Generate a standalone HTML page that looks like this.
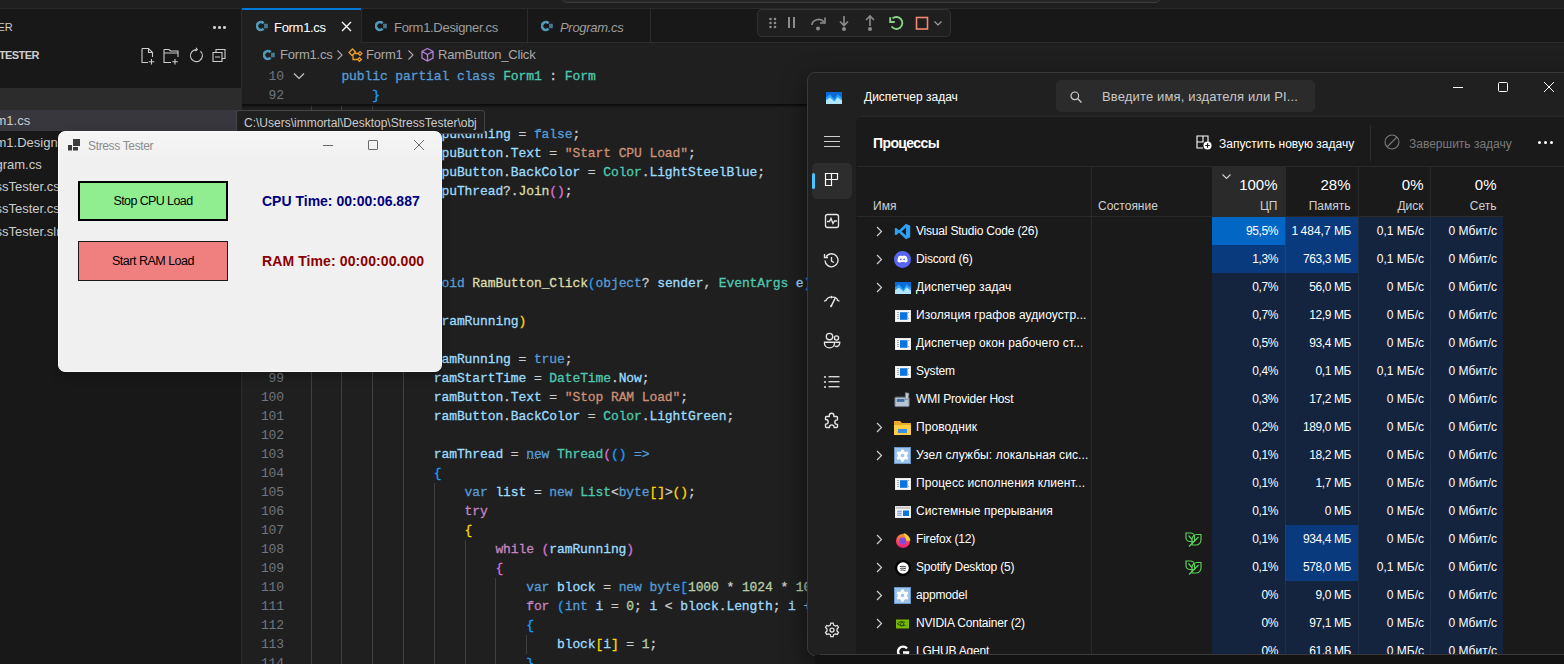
<!DOCTYPE html><html><head><meta charset='utf-8'><style>
*{box-sizing:border-box;margin:0;padding:0}
html,body{width:1564px;height:664px;overflow:hidden;background:#1f1f1f;font-family:"Liberation Sans",sans-serif;}
.a{position:absolute}
.t{position:absolute;white-space:pre;line-height:1}
.mono{font-family:"Liberation Mono",monospace;font-size:13px;letter-spacing:-0.1px;-webkit-text-stroke:0.3px currentColor;white-space:pre;position:absolute;line-height:19px;height:19px}
.k{color:#569cd6}.c{color:#c586c0}.y{color:#4ec9b0}.v{color:#9cdcfe}.f{color:#dcdcaa}.s{color:#ce9178}.n{color:#b5cea8}.p{color:#cccccc}
.b1{color:#ffd700}.b2{color:#da70d6}.b3{color:#179fff}
.ln{color:#6e7681;text-align:right;width:40px;-webkit-text-stroke:0}
.g{position:absolute;width:1px;background:#404040}
</style></head><body>
<div class='a' style='left:0;top:0;width:1564px;height:8px;background:#1f1f1f'></div>
<div class='a' style='left:561px;top:-20px;width:600px;height:23px;background:#262626;border:1px solid #3c3c3c;border-radius:6px'></div>
<div class='a' style='left:0;top:8px;width:1564px;height:1px;background:#2b2b2b'></div>
<div class='a' style='left:0;top:9px;width:241px;height:655px;background:#181818'></div>
<div class='a' style='left:241px;top:9px;width:1px;height:655px;background:#2b2b2b'></div>
<div class='t' style='left:-2.5px;top:22px;font-size:11px;color:#cccccc'>ER</div>
<div class='a' style='left:213px;top:26px;width:2.5px;height:2.5px;border-radius:50%;background:#cccccc'></div>
<div class='a' style='left:218px;top:26px;width:2.5px;height:2.5px;border-radius:50%;background:#cccccc'></div>
<div class='a' style='left:223px;top:26px;width:2.5px;height:2.5px;border-radius:50%;background:#cccccc'></div>
<div class='t' style='left:-1px;top:50px;font-size:11px;font-weight:700;color:#cccccc;letter-spacing:-0.6px'>TESTER</div>
<svg class='a' style='left:140px;top:47px' width='88' height='18' viewBox='0 0 88 18' fill='none' stroke='#cccccc' stroke-width='1.1'>
<path d='M2 1.5h6.5l4 4v4.5M2 1.5v14h6M8.5 1.5v4h4M11.5 12v5.5M8.8 14.8h5.5'/>
<path d='M24 2.5h5l1.5 1.5h7.5v6M24 2.5v13h7M24 6h14M35 12v5.5M32.3 14.8h5.5'/>
<path d='M60.5 4.2a6 6 0 1 1-4.2-1.6M56 0.8l1.3 1.9-2 1.3'/>
<path d='M76 5.5v-3h9v9h-3M73 5.5h9v9h-9zM75 10h5'/>
</svg>
<div class='a' style='left:0;top:88px;width:241px;height:22px;background:#2c2c2c'></div>
<div class='a' style='left:0;top:110px;width:241px;height:21px;background:#37373d'></div>
<div class='t' style='left:-4.5px;top:114.0px;font-size:13px;color:#cccccc'>m1.cs</div>
<div class='t' style='left:-4.5px;top:136.2px;font-size:13px;color:#cccccc'>m1.Designer.cs</div>
<div class='t' style='left:-4.5px;top:158.0px;font-size:13px;color:#cccccc'>gram.cs</div>
<div class='t' style='left:-4.5px;top:180.4px;font-size:13px;color:#cccccc'>ssTester.cs</div>
<div class='t' style='left:-4.5px;top:202.1px;font-size:13px;color:#cccccc'>ssTester.cs</div>
<div class='t' style='left:-4.5px;top:224.5px;font-size:13px;color:#cccccc'>ssTester.sln</div>
<div class='a' style='left:242px;top:9px;width:1322px;height:34px;background:#181818'></div>
<div class='a' style='left:242px;top:42px;width:1322px;height:1px;background:#2b2b2b'></div>
<div class='a' style='left:242px;top:8px;width:119px;height:35px;background:#1f1f1f;border-top:2px solid #0078d4'></div>
<div class='a' style='left:361px;top:9px;width:1px;height:34px;background:#2b2b2b'></div>
<div class='a' style='left:527px;top:9px;width:1px;height:34px;background:#2b2b2b'></div>
<div class='a' style='left:650px;top:9px;width:1px;height:34px;background:#2b2b2b'></div>
<svg class='a' style='left:256px;top:20px' width='12' height='12' viewBox='0 0 12 12'><path d='M7.6 3.2A3.9 3.9 0 1 0 7.6 8.8' stroke='#519aba' stroke-width='2.6' fill='none'/><path d='M9 3.6v4.8M10.9 3.6v4.8M8.1 5h3.7M8.1 7h3.7' stroke='#519aba' stroke-width='0.95'/></svg>
<div class='t' style='left:274px;top:21px;font-size:13px;color:#ffffff;letter-spacing:-0.3px'>Form1.cs</div>
<svg class='a' style='left:341px;top:21px' width='11' height='11' viewBox='0 0 11 11'><path d='M1 1l9 9M10 1l-9 9' stroke='#ffffff' stroke-width='1.3'/></svg>
<svg class='a' style='left:375px;top:20px' width='12' height='12' viewBox='0 0 12 12'><path d='M7.6 3.2A3.9 3.9 0 1 0 7.6 8.8' stroke='#519aba' stroke-width='2.6' fill='none'/><path d='M9 3.6v4.8M10.9 3.6v4.8M8.1 5h3.7M8.1 7h3.7' stroke='#519aba' stroke-width='0.95'/></svg>
<div class='t' style='left:394px;top:21px;font-size:13px;color:#9d9d9d;letter-spacing:-0.3px'>Form1.Designer.cs</div>
<svg class='a' style='left:541px;top:20px' width='12' height='12' viewBox='0 0 12 12'><path d='M7.6 3.2A3.9 3.9 0 1 0 7.6 8.8' stroke='#519aba' stroke-width='2.6' fill='none'/><path d='M9 3.6v4.8M10.9 3.6v4.8M8.1 5h3.7M8.1 7h3.7' stroke='#519aba' stroke-width='0.95'/></svg>
<div class='t' style='left:560px;top:21px;font-size:13px;color:#9d9d9d;font-style:italic;letter-spacing:-0.3px'>Program.cs</div>
<svg class='a' style='left:263px;top:49px' width='12' height='12' viewBox='0 0 12 12'><path d='M7.6 3.2A3.9 3.9 0 1 0 7.6 8.8' stroke='#519aba' stroke-width='2.6' fill='none'/><path d='M9 3.6v4.8M10.9 3.6v4.8M8.1 5h3.7M8.1 7h3.7' stroke='#519aba' stroke-width='0.95'/></svg>
<div class='t' style='left:280px;top:48px;font-size:13px;color:#a9a9a9;letter-spacing:-0.2px'>Form1.cs</div>
<svg class='a' style='left:336px;top:49px' width='8' height='12' viewBox='0 0 8 12'><path d='M1.5 1.5l4.5 4.5-4.5 4.5' stroke='#a9a9a9' stroke-width='1.1' fill='none'/></svg>
<svg class='a' style='left:348px;top:48px' width='15' height='15' viewBox='0 0 15 15' fill='none' stroke='#ee9d28' stroke-width='1.3'><path d='M1 4.5L4.5 1 7.5 4 4 7.5Z'/><path d='M12 3.6l1.9 1.9-1.9 1.9-1.9-1.9Z'/><path d='M11.5 9.6l1.9 1.9-1.9 1.9-1.9-1.9Z'/><path d='M6.3 5.5H10.1M5 6.8V11.5H9.6'/></svg>
<div class='t' style='left:366px;top:48px;font-size:13px;color:#a9a9a9;letter-spacing:-0.2px'>Form1</div>
<svg class='a' style='left:407px;top:49px' width='8' height='12' viewBox='0 0 8 12'><path d='M1.5 1.5l4.5 4.5-4.5 4.5' stroke='#a9a9a9' stroke-width='1.1' fill='none'/></svg>
<svg class='a' style='left:420px;top:47px' width='15' height='16' viewBox='0 0 15 16' fill='none' stroke='#b180d7' stroke-width='1.3'><path d='M7.5 1.5l5.5 3v6.5l-5.5 3-5.5-3v-6.5zM2 4.5l5.5 3 5.5-3M7.5 7.5v6.5'/></svg>
<div class='t' style='left:438px;top:48px;font-size:13px;color:#a9a9a9;letter-spacing:-0.2px'>RamButton_Click</div>
<div class='a' style='left:242px;top:43px;width:565px;height:621px;overflow:hidden'>
<div class='a' style='left:-242px;top:-43px;width:1564px;height:664px'>
<div class='g' style='left:310.6px;top:273.5px;height:19px'></div><div class='g' style='left:341.4px;top:273.5px;height:19px'></div>
<div class='mono ln' style='left:244px;top:273.5px'>94</div>
<div class='mono' style='left:372.2px;top:273.5px'><span class='k'>private</span><span class='p'> </span><span class='k'>void</span><span class='p'> </span><span class='f'>RamButton_Click</span><span class='b3'>(</span><span class='k'>object</span><span class='p'>? </span><span class='v'>sender</span><span class='p'>, </span><span class='y'>EventArgs</span><span class='p'> </span><span class='v'>e</span><span class='b3'>)</span></div>
<div class='g' style='left:310.6px;top:292.5px;height:19px'></div><div class='g' style='left:341.4px;top:292.5px;height:19px'></div>
<div class='mono ln' style='left:244px;top:292.5px'>95</div>
<div class='mono' style='left:372.2px;top:292.5px'><span class='b3'>{</span></div>
<div class='g' style='left:310.6px;top:311.5px;height:19px'></div><div class='g' style='left:341.4px;top:311.5px;height:19px'></div><div class='g' style='left:372.2px;top:311.5px;height:19px'></div>
<div class='mono ln' style='left:244px;top:311.5px'>96</div>
<div class='mono' style='left:403.0px;top:311.5px'><span class='c'>if</span><span class='p'> </span><span class='b1'>(</span><span class='p'>!</span><span class='v'>ramRunning</span><span class='b1'>)</span></div>
<div class='g' style='left:310.6px;top:330.5px;height:19px'></div><div class='g' style='left:341.4px;top:330.5px;height:19px'></div><div class='g' style='left:372.2px;top:330.5px;height:19px'></div>
<div class='mono ln' style='left:244px;top:330.5px'>97</div>
<div class='mono' style='left:403.0px;top:330.5px'><span class='b1'>{</span></div>
<div class='g' style='left:310.6px;top:349.5px;height:19px'></div><div class='g' style='left:341.4px;top:349.5px;height:19px'></div><div class='g' style='left:372.2px;top:349.5px;height:19px'></div><div class='g' style='left:403.0px;top:349.5px;height:19px'></div>
<div class='mono ln' style='left:244px;top:349.5px'>98</div>
<div class='mono' style='left:433.8px;top:349.5px'><span class='v'>ramRunning</span><span class='p'> = </span><span class='k'>true</span><span class='p'>;</span></div>
<div class='g' style='left:310.6px;top:368.5px;height:19px'></div><div class='g' style='left:341.4px;top:368.5px;height:19px'></div><div class='g' style='left:372.2px;top:368.5px;height:19px'></div><div class='g' style='left:403.0px;top:368.5px;height:19px'></div>
<div class='mono ln' style='left:244px;top:368.5px'>99</div>
<div class='mono' style='left:433.8px;top:368.5px'><span class='v'>ramStartTime</span><span class='p'> = </span><span class='y'>DateTime</span><span class='p'>.</span><span class='v'>Now</span><span class='p'>;</span></div>
<div class='g' style='left:310.6px;top:387.5px;height:19px'></div><div class='g' style='left:341.4px;top:387.5px;height:19px'></div><div class='g' style='left:372.2px;top:387.5px;height:19px'></div><div class='g' style='left:403.0px;top:387.5px;height:19px'></div>
<div class='mono ln' style='left:244px;top:387.5px'>100</div>
<div class='mono' style='left:433.8px;top:387.5px'><span class='v'>ramButton</span><span class='p'>.</span><span class='v'>Text</span><span class='p'> = </span><span class='s'>&quot;Stop RAM Load&quot;</span><span class='p'>;</span></div>
<div class='g' style='left:310.6px;top:406.5px;height:19px'></div><div class='g' style='left:341.4px;top:406.5px;height:19px'></div><div class='g' style='left:372.2px;top:406.5px;height:19px'></div><div class='g' style='left:403.0px;top:406.5px;height:19px'></div>
<div class='mono ln' style='left:244px;top:406.5px'>101</div>
<div class='mono' style='left:433.8px;top:406.5px'><span class='v'>ramButton</span><span class='p'>.</span><span class='v'>BackColor</span><span class='p'> = </span><span class='y'>Color</span><span class='p'>.</span><span class='v'>LightGreen</span><span class='p'>;</span></div>
<div class='g' style='left:310.6px;top:425.5px;height:19px'></div><div class='g' style='left:341.4px;top:425.5px;height:19px'></div><div class='g' style='left:372.2px;top:425.5px;height:19px'></div><div class='g' style='left:403.0px;top:425.5px;height:19px'></div>
<div class='mono ln' style='left:244px;top:425.5px'>102</div>
<div class='mono' style='left:310.6px;top:425.5px'></div>
<div class='g' style='left:310.6px;top:444.5px;height:19px'></div><div class='g' style='left:341.4px;top:444.5px;height:19px'></div><div class='g' style='left:372.2px;top:444.5px;height:19px'></div><div class='g' style='left:403.0px;top:444.5px;height:19px'></div>
<div class='mono ln' style='left:244px;top:444.5px'>103</div>
<div class='mono' style='left:433.8px;top:444.5px'><span class='v'>ramThread</span><span class='p'> = </span><span class='k'>new</span><span class='p'> </span><span class='y'>Thread</span><span class='b2'>(</span><span class='b3'>()</span><span class='p'> </span><span class='k'>=&gt;</span></div>
<div class='g' style='left:310.6px;top:463.5px;height:19px'></div><div class='g' style='left:341.4px;top:463.5px;height:19px'></div><div class='g' style='left:372.2px;top:463.5px;height:19px'></div><div class='g' style='left:403.0px;top:463.5px;height:19px'></div>
<div class='mono ln' style='left:244px;top:463.5px'>104</div>
<div class='mono' style='left:433.8px;top:463.5px'><span class='b3'>{</span></div>
<div class='g' style='left:310.6px;top:482.5px;height:19px'></div><div class='g' style='left:341.4px;top:482.5px;height:19px'></div><div class='g' style='left:372.2px;top:482.5px;height:19px'></div><div class='g' style='left:403.0px;top:482.5px;height:19px'></div><div class='g' style='left:433.8px;top:482.5px;height:19px'></div>
<div class='mono ln' style='left:244px;top:482.5px'>105</div>
<div class='mono' style='left:464.6px;top:482.5px'><span class='k'>var</span><span class='p'> </span><span class='v'>list</span><span class='p'> = </span><span class='k'>new</span><span class='p'> </span><span class='y'>List</span><span class='p'>&lt;</span><span class='k'>byte</span><span class='b1'>[]</span><span class='p'>&gt;</span><span class='b1'>()</span><span class='p'>;</span></div>
<div class='g' style='left:310.6px;top:501.5px;height:19px'></div><div class='g' style='left:341.4px;top:501.5px;height:19px'></div><div class='g' style='left:372.2px;top:501.5px;height:19px'></div><div class='g' style='left:403.0px;top:501.5px;height:19px'></div><div class='g' style='left:433.8px;top:501.5px;height:19px'></div>
<div class='mono ln' style='left:244px;top:501.5px'>106</div>
<div class='mono' style='left:464.6px;top:501.5px'><span class='c'>try</span></div>
<div class='g' style='left:310.6px;top:520.5px;height:19px'></div><div class='g' style='left:341.4px;top:520.5px;height:19px'></div><div class='g' style='left:372.2px;top:520.5px;height:19px'></div><div class='g' style='left:403.0px;top:520.5px;height:19px'></div><div class='g' style='left:433.8px;top:520.5px;height:19px'></div>
<div class='mono ln' style='left:244px;top:520.5px'>107</div>
<div class='mono' style='left:464.6px;top:520.5px'><span class='b1'>{</span></div>
<div class='g' style='left:310.6px;top:539.5px;height:19px'></div><div class='g' style='left:341.4px;top:539.5px;height:19px'></div><div class='g' style='left:372.2px;top:539.5px;height:19px'></div><div class='g' style='left:403.0px;top:539.5px;height:19px'></div><div class='g' style='left:433.8px;top:539.5px;height:19px'></div><div class='g' style='left:464.6px;top:539.5px;height:19px'></div>
<div class='mono ln' style='left:244px;top:539.5px'>108</div>
<div class='mono' style='left:495.4px;top:539.5px'><span class='c'>while</span><span class='p'> </span><span class='b2'>(</span><span class='v'>ramRunning</span><span class='b2'>)</span></div>
<div class='g' style='left:310.6px;top:558.5px;height:19px'></div><div class='g' style='left:341.4px;top:558.5px;height:19px'></div><div class='g' style='left:372.2px;top:558.5px;height:19px'></div><div class='g' style='left:403.0px;top:558.5px;height:19px'></div><div class='g' style='left:433.8px;top:558.5px;height:19px'></div><div class='g' style='left:464.6px;top:558.5px;height:19px'></div>
<div class='mono ln' style='left:244px;top:558.5px'>109</div>
<div class='mono' style='left:495.4px;top:558.5px'><span class='b2'>{</span></div>
<div class='g' style='left:310.6px;top:577.5px;height:19px'></div><div class='g' style='left:341.4px;top:577.5px;height:19px'></div><div class='g' style='left:372.2px;top:577.5px;height:19px'></div><div class='g' style='left:403.0px;top:577.5px;height:19px'></div><div class='g' style='left:433.8px;top:577.5px;height:19px'></div><div class='g' style='left:464.6px;top:577.5px;height:19px'></div><div class='g' style='left:495.4px;top:577.5px;height:19px'></div>
<div class='mono ln' style='left:244px;top:577.5px'>110</div>
<div class='mono' style='left:526.2px;top:577.5px'><span class='k'>var</span><span class='p'> </span><span class='v'>block</span><span class='p'> = </span><span class='k'>new</span><span class='p'> </span><span class='k'>byte</span><span class='b3'>[</span><span class='n'>1000</span><span class='p'> * </span><span class='n'>1024</span><span class='p'> * </span><span class='n'>1024</span><span class='b3'>]</span><span class='p'>;</span></div>
<div class='g' style='left:310.6px;top:596.5px;height:19px'></div><div class='g' style='left:341.4px;top:596.5px;height:19px'></div><div class='g' style='left:372.2px;top:596.5px;height:19px'></div><div class='g' style='left:403.0px;top:596.5px;height:19px'></div><div class='g' style='left:433.8px;top:596.5px;height:19px'></div><div class='g' style='left:464.6px;top:596.5px;height:19px'></div><div class='g' style='left:495.4px;top:596.5px;height:19px'></div>
<div class='mono ln' style='left:244px;top:596.5px'>111</div>
<div class='mono' style='left:526.2px;top:596.5px'><span class='c'>for</span><span class='p'> </span><span class='b3'>(</span><span class='k'>int</span><span class='p'> </span><span class='v'>i</span><span class='p'> = </span><span class='n'>0</span><span class='p'>; </span><span class='v'>i</span><span class='p'> &lt; </span><span class='v'>block</span><span class='p'>.</span><span class='v'>Length</span><span class='p'>; </span><span class='v'>i</span><span class='p'> += </span><span class='n'>4096</span><span class='b3'>)</span></div>
<div class='g' style='left:310.6px;top:615.5px;height:19px'></div><div class='g' style='left:341.4px;top:615.5px;height:19px'></div><div class='g' style='left:372.2px;top:615.5px;height:19px'></div><div class='g' style='left:403.0px;top:615.5px;height:19px'></div><div class='g' style='left:433.8px;top:615.5px;height:19px'></div><div class='g' style='left:464.6px;top:615.5px;height:19px'></div><div class='g' style='left:495.4px;top:615.5px;height:19px'></div>
<div class='mono ln' style='left:244px;top:615.5px'>112</div>
<div class='mono' style='left:526.2px;top:615.5px'><span class='b3'>{</span></div>
<div class='g' style='left:310.6px;top:634.5px;height:19px'></div><div class='g' style='left:341.4px;top:634.5px;height:19px'></div><div class='g' style='left:372.2px;top:634.5px;height:19px'></div><div class='g' style='left:403.0px;top:634.5px;height:19px'></div><div class='g' style='left:433.8px;top:634.5px;height:19px'></div><div class='g' style='left:464.6px;top:634.5px;height:19px'></div><div class='g' style='left:495.4px;top:634.5px;height:19px'></div><div class='g' style='left:526.2px;top:634.5px;height:19px'></div>
<div class='mono ln' style='left:244px;top:634.5px'>113</div>
<div class='mono' style='left:557.0px;top:634.5px'><span class='v'>block</span><span class='b1'>[</span><span class='v'>i</span><span class='b1'>]</span><span class='p'> = </span><span class='n'>1</span><span class='p'>;</span></div>
<div class='g' style='left:310.6px;top:653.5px;height:19px'></div><div class='g' style='left:341.4px;top:653.5px;height:19px'></div><div class='g' style='left:372.2px;top:653.5px;height:19px'></div><div class='g' style='left:403.0px;top:653.5px;height:19px'></div><div class='g' style='left:433.8px;top:653.5px;height:19px'></div><div class='g' style='left:464.6px;top:653.5px;height:19px'></div><div class='g' style='left:495.4px;top:653.5px;height:19px'></div>
<div class='mono ln' style='left:244px;top:653.5px'>114</div>
<div class='mono' style='left:526.2px;top:653.5px'><span class='b3'>}</span></div>
<div class='g' style='left:310.6px;top:124.8px;height:19px'></div><div class='g' style='left:341.4px;top:124.8px;height:19px'></div><div class='g' style='left:372.2px;top:124.8px;height:19px'></div><div class='g' style='left:403.0px;top:124.8px;height:19px'></div>
<div class='mono' style='left:433.8px;top:124.8px'><span class='v'>cpuRunning</span><span class='p'> = </span><span class='k'>false</span><span class='p'>;</span></div>
<div class='g' style='left:310.6px;top:143.8px;height:19px'></div><div class='g' style='left:341.4px;top:143.8px;height:19px'></div><div class='g' style='left:372.2px;top:143.8px;height:19px'></div><div class='g' style='left:403.0px;top:143.8px;height:19px'></div>
<div class='mono' style='left:433.8px;top:143.8px'><span class='v'>cpuButton</span><span class='p'>.</span><span class='v'>Text</span><span class='p'> = </span><span class='s'>&quot;Start CPU Load&quot;</span><span class='p'>;</span></div>
<div class='g' style='left:310.6px;top:162.8px;height:19px'></div><div class='g' style='left:341.4px;top:162.8px;height:19px'></div><div class='g' style='left:372.2px;top:162.8px;height:19px'></div><div class='g' style='left:403.0px;top:162.8px;height:19px'></div>
<div class='mono' style='left:433.8px;top:162.8px'><span class='v'>cpuButton</span><span class='p'>.</span><span class='v'>BackColor</span><span class='p'> = </span><span class='y'>Color</span><span class='p'>.</span><span class='v'>LightSteelBlue</span><span class='p'>;</span></div>
<div class='g' style='left:310.6px;top:181.8px;height:19px'></div><div class='g' style='left:341.4px;top:181.8px;height:19px'></div><div class='g' style='left:372.2px;top:181.8px;height:19px'></div><div class='g' style='left:403.0px;top:181.8px;height:19px'></div>
<div class='mono' style='left:433.8px;top:181.8px'><span class='v'>cpuThread</span><span class='p'>?.</span><span class='f'>Join</span><span class='b2'>()</span><span class='p'>;</span></div>
<div class='g' style='left:310.6px;top:200.8px;height:19px'></div><div class='g' style='left:341.4px;top:200.8px;height:19px'></div><div class='g' style='left:372.2px;top:200.8px;height:19px'></div>
<div class='mono' style='left:403.0px;top:200.8px'><span class='b1'>}</span></div>
<div class='g' style='left:310.6px;top:219.8px;height:19px'></div><div class='g' style='left:341.4px;top:219.8px;height:19px'></div>
<div class='mono' style='left:372.2px;top:219.8px'><span class='b3'>}</span></div>
<div class='g' style='left:310.6px;top:238.8px;height:19px'></div><div class='g' style='left:341.4px;top:238.8px;height:19px'></div>
<div class='mono' style='left:310.6px;top:238.8px'></div>
<div class='g' style='left:310.6px;top:104.0px;height:20px'></div><div class='g' style='left:341.4px;top:104.0px;height:20px'></div><div class='g' style='left:372.2px;top:104.0px;height:20px'></div>
<div class='a' style='left:527px;top:458px;width:11px;height:0;border-top:1.5px dotted #8a8a8a'></div>
</div></div>
<div class='a' style='left:242px;top:66px;width:565px;height:38px;background:#1f1f1f'></div>
<div class='a' style='left:242px;top:104px;width:565px;height:4px;background:linear-gradient(#0a0a0a,rgba(31,31,31,0))'></div>
<div class='mono ln' style='left:244px;top:67px'>10</div>
<svg class='a' style='left:293px;top:72px' width='12' height='8' viewBox='0 0 12 8'><path d='M1 1.5l5 5 5-5' stroke='#c5c5c5' stroke-width='1.2' fill='none'/></svg>
<div class='mono' style='left:341.4px;top:67.0px'><span class='k'>public</span><span class='p'> </span><span class='k'>partial</span><span class='p'> </span><span class='k'>class</span><span class='p'> </span><span class='y'>Form1</span><span class='p'> : </span><span class='y'>Form</span></div>
<div class='mono ln' style='left:244px;top:86px'>92</div>
<div class='mono' style='left:372.2px;top:86.0px'><span class='b3'>}</span></div>
<div class='a' style='left:757px;top:9px;width:194px;height:28px;background:#1f1f1f;border:1px solid #333333;border-radius:5px'></div>
<svg class='a' style='left:757px;top:9px' width='194' height='28' viewBox='0 0 194 28'>
<g fill='#8c8c8c'><circle cx='13.5' cy='10' r='1.3'/><circle cx='18' cy='10' r='1.3'/><circle cx='13.5' cy='14' r='1.3'/><circle cx='18' cy='14' r='1.3'/><circle cx='13.5' cy='18' r='1.3'/><circle cx='18' cy='18' r='1.3'/></g>
<g fill='#8c8c8c'><rect x='31' y='8' width='2' height='11'/><rect x='36' y='8' width='2' height='11'/></g>
<path d='M55 16a6.5 5.5 0 0 1 12-3' stroke='#8c8c8c' stroke-width='1.6' fill='none'/><path d='M68 8.5v5.5h-5' stroke='#8c8c8c' stroke-width='1.6' fill='none'/><circle cx='61' cy='19.5' r='2' fill='#8c8c8c'/>
<path d='M87 7v9M83 12.5l4 4 4-4' stroke='#8c8c8c' stroke-width='1.6' fill='none'/><circle cx='87' cy='20' r='2' fill='#8c8c8c'/>
<path d='M113 17V7.5M109 11l4-4 4 4' stroke='#8c8c8c' stroke-width='1.6' fill='none'/><circle cx='113' cy='20' r='2' fill='#8c8c8c'/>
<path d='M134.5 17.5A6 6 0 1 0 135.4 9.4' stroke='#89d185' stroke-width='1.9' fill='none'/><path d='M133.2 8.3V13h4.6' stroke='#89d185' stroke-width='1.9' fill='none'/>
<rect x='159.5' y='8.5' width='11' height='11.5' stroke='#f48771' stroke-width='1.6' fill='none'/>
<path d='M177.5 12.5l3.5 3.5 3.5-3.5' stroke='#a0a0a0' stroke-width='1.2' fill='none'/>
</svg>
<div class='a' style='left:235.5px;top:110px;width:249px;height:23.5px;background:#202020;border:1px solid #454545;border-radius:3px'></div>
<div class='t' style='left:244px;top:117px;font-size:12px;color:#cccccc'>C:\Users\immortal\Desktop\StressTester\obj</div>
<div class='a' style='left:58px;top:131px;width:384px;height:241px;background:linear-gradient(#f5f5f5,#f0f0f0 30px);border-radius:7px;box-shadow:0 4px 10px rgba(0,0,0,0.25);border:1px solid #fafafa'></div>
<svg class='a' style='left:68px;top:139px' width='13' height='12' viewBox='0 0 13 12'><rect x='0' y='6' width='4' height='5.5' fill='#3c3c3c'/><rect x='5' y='0' width='7' height='7' fill='#3c3c3c'/><rect x='5' y='8' width='5' height='3.5' fill='#3c3c3c'/></svg>
<div class='t' style='left:88px;top:140px;font-size:12px;color:#8c8c8c;letter-spacing:-0.35px'>Stress Tester</div>
<div class='a' style='left:323px;top:145px;width:10px;height:1px;background:#6a6a6a'></div>
<div class='a' style='left:368px;top:140px;width:10px;height:10px;border:1px solid #6a6a6a;border-radius:1px'></div>
<svg class='a' style='left:414px;top:140px' width='10' height='10' viewBox='0 0 10 10'><path d='M0 0l10 10M10 0l-10 10' stroke='#6a6a6a' stroke-width='1'/></svg>
<div class='a' style='left:78px;top:181px;width:150px;height:40px;background:#90ee90;border:2px solid #000'></div>
<div class='t' style='left:78px;top:195px;width:150px;text-align:center;font-size:12.5px;color:#000;letter-spacing:-0.6px'>Stop CPU Load</div>
<div class='a' style='left:78px;top:241px;width:150px;height:40px;background:#f08080;border:1px solid #1a1a1a'></div>
<div class='t' style='left:78px;top:255px;width:150px;text-align:center;font-size:12.5px;color:#000;letter-spacing:-0.5px'>Start RAM Load</div>
<div class='t' style='left:262px;top:194px;font-size:14px;font-weight:700;color:#000080;letter-spacing:0px'>CPU Time: 00:00:06.887</div>
<div class='t' style='left:262px;top:254px;font-size:14px;font-weight:700;color:#8b0000;letter-spacing:0.1px'>RAM Time: 00:00:00.000</div>
<div class='a' style='left:807px;top:72px;width:800px;height:583.5px;background:#202020;border:1px solid #3a3a3a;border-radius:8px;box-shadow:0 8px 24px rgba(0,0,0,0.5)'></div>
<div class='a' style='left:815px;top:655px;width:749px;height:9px;background:#131313'></div>
<div class='a' style='left:826px;top:90px'><svg width='16' height='12' viewBox='0 0 16 12'><rect width='16' height='12' fill='#0a6ad8'/><path d='M0 5.5L4 2.2l4.5 5.3 3-5.3L16 5.8V12H0z' fill='#2ba3f2'/><path d='M0 8.2L4 5.5l4.5 4 3-4.2L16 8.6V12H0z' fill='#b2e6ff'/></svg></div>
<div class='t' style='left:864px;top:91px;font-size:12px;color:#ffffff'>Диспетчер задач</div>
<div class='a' style='left:1056px;top:80px;width:259px;height:32px;background:#2b2b2b;border-radius:5px'></div>
<svg class='a' style='left:1070px;top:91px' width='12' height='12' viewBox='0 0 12 12'><circle cx='4.8' cy='4.8' r='3.8' stroke='#cfcfcf' stroke-width='1.2' fill='none'/><path d='M7.5 7.5l4 4' stroke='#cfcfcf' stroke-width='1.3'/></svg>
<div class='t' style='left:1102px;top:90px;font-size:13px;color:#c8c8c8;letter-spacing:0.15px'>Введите имя, издателя или PI...</div>
<div class='a' style='left:1453px;top:87px;width:10px;height:1px;background:#ffffff'></div>
<div class='a' style='left:1498px;top:82px;width:10px;height:10px;border:1px solid #ffffff;border-radius:1.5px'></div>
<svg class='a' style='left:1544px;top:82px' width='10' height='10' viewBox='0 0 10 10'><path d='M0 0l10 10M10 0l-10 10' stroke='#ffffff' stroke-width='1'/></svg>
<div class='a' style='left:824px;top:136px;width:16px;height:1.2px;background:#d0d0d0'></div>
<div class='a' style='left:824px;top:141px;width:16px;height:1.2px;background:#d0d0d0'></div>
<div class='a' style='left:824px;top:146px;width:16px;height:1.2px;background:#d0d0d0'></div>
<div class='a' style='left:812px;top:163px;width:40px;height:36px;background:#2d2d2d;border-radius:5px'></div>
<div class='a' style='left:812px;top:173px;width:3px;height:16px;background:#4cc2ff;border-radius:2px'></div>

<svg class='a' style='left:824px;top:172px' width='16' height='16' viewBox='0 0 16 16' fill='none' stroke='#ffffff' stroke-width='1.2'><path d='M1.5 1.5h6v6h-6zM7.5 1.5h6v6M1.5 7.5v6h6v-6M7.5 7.5h6'/></svg>
<svg class='a' style='left:824px;top:213px' width='16' height='16' viewBox='0 0 16 16' fill='none' stroke='#e6e6e6' stroke-width='1.35'><rect x='1.5' y='1.5' width='13' height='13' rx='2'/><path d='M3 8.5h2.5l1.5-3 2 5 1.5-2.5H13'/></svg>
<svg class='a' style='left:823px;top:252px' width='17' height='17' viewBox='0 0 17 17' fill='none' stroke='#e6e6e6' stroke-width='1.35'><path d='M3.2 4.5A6.5 6.5 0 1 1 2 8.5M1.5 2v3.5H5M8.5 5v4l2.5 1.5'/></svg>
<svg class='a' style='left:823px;top:292px' width='18' height='16' viewBox='0 0 18 16' fill='none' stroke='#e6e6e6' stroke-width='1.35' stroke-linecap='round'><path d='M3 8.5A6.5 6 0 0 1 15 8.5M1.5 9l1.8-.8M16 9l-1.8-.8M8.5 4.5v1.2'/><path d='M8 14.5L12 6.5' stroke-width='1.6'/><circle cx='8.3' cy='13.8' r='1' fill='#e6e6e6' stroke='none'/></svg>
<svg class='a' style='left:823px;top:332px' width='18' height='17' viewBox='0 0 18 17' fill='none' stroke='#e6e6e6' stroke-width='1.35'><circle cx='6.5' cy='4.5' r='3.2'/><circle cx='13.5' cy='6' r='2.1'/><path d='M1.5 10.2h10v1.3a5 4.3 0 0 1-10 0z'/><path d='M12.2 10.2h4.5v1a3.3 3.3 0 0 1-5 2.8'/></svg>
<svg class='a' style='left:823px;top:375px' width='17' height='14' viewBox='0 0 17 14' fill='#d8d8d8'><circle cx='2' cy='2' r='1.1'/><circle cx='2' cy='7' r='1.1'/><circle cx='2' cy='12' r='1.1'/><rect x='5.5' y='1' width='11' height='1.4'/><rect x='5.5' y='6' width='11' height='1.4'/><rect x='5.5' y='11' width='11' height='1.4'/></svg>
<svg class='a' style='left:823px;top:412px' width='17' height='17' viewBox='0 0 17 17' fill='none' stroke='#e6e6e6' stroke-width='1.35' stroke-linejoin='round'><path d='M6.3 3.5a2.3 2.3 0 0 1 4.6 0v1h2.6a1 1 0 0 1 1 1v2.3h-.4a2.3 2.3 0 0 0 0 4.6h.4v2.1a1 1 0 0 1-1 1h-2.4v-.4a2.3 2.3 0 0 0-4.6 0v.4H3.5a1 1 0 0 1-1-1v-2.4h.4a2.3 2.3 0 0 0 0-4.6h-.4V5.5a1 1 0 0 1 1-1h2.8z'/></svg>
<svg class='a' style='left:824px;top:622px' width='16' height='16' viewBox='0 0 16 16' fill='none' stroke='#e6e6e6' stroke-width='1.25'><path d='M6.8 1.2h2.4l.5 2 1.6.9 2-.6 1.2 2-1.5 1.5v1.9l1.5 1.5-1.2 2-2-.6-1.6.9-.5 2H6.8l-.5-2-1.6-.9-2 .6-1.2-2L3 8.9V7L1.5 5.5l1.2-2 2 .6 1.6-.9z'/><circle cx='8' cy='8' r='2'/></svg>

<div class='a' style='left:856px;top:116px;width:760px;height:538.5px;background:#1a1a1a;border-top-left-radius:5px;border-top:1.5px solid #262626'></div>
<div class='t' style='left:873px;top:136px;font-size:14px;font-weight:700;color:#ffffff;letter-spacing:-0.6px'>Процессы</div>
<svg class='a' style='left:1196px;top:135px' width='16' height='15' viewBox='0 0 16 15' fill='none' stroke='#ffffff' stroke-width='1.1'><path d='M1 1h6v6H1zM7 1h5v6M1 7v6h6'/><circle cx='11.5' cy='10.5' r='4' fill='#ffffff' stroke='none'/><path d='M11.5 8.3v4.4M9.3 10.5h4.4' stroke='#1a1a1a' stroke-width='1.2'/></svg>
<div class='t' style='left:1219px;top:137.7px;font-size:12px;color:#ffffff'>Запустить новую задачу</div>
<div class='a' style='left:1370px;top:125px;width:1px;height:36px;background:#2e2e2e'></div>
<svg class='a' style='left:1384px;top:134px' width='16' height='16' viewBox='0 0 16 16' fill='none' stroke='#7a7a7a' stroke-width='1.1'><circle cx='8' cy='8' r='7'/><path d='M3 13L13 3'/></svg>
<div class='t' style='left:1409px;top:137.7px;font-size:12px;color:#7a7a7a'>Завершить задачу</div>
<div class='a' style='left:1538px;top:141px;width:3px;height:3px;border-radius:50%;background:#ffffff'></div>
<div class='a' style='left:1544px;top:141px;width:3px;height:3px;border-radius:50%;background:#ffffff'></div>
<div class='a' style='left:1550px;top:141px;width:3px;height:3px;border-radius:50%;background:#ffffff'></div>
<div class='a' style='left:857px;top:166px;width:707px;height:1px;background:#2a2a2a'></div>
<div class='a' style='left:1091px;top:167px;width:1px;height:487px;background:#2a2a2a'></div>
<div class='a' style='left:1212px;top:167px;width:73px;height:49px;background:#2a2a2a'></div>
<div class='a' style='left:1285px;top:167px;width:1px;height:49px;background:#2a2a2a'></div>
<div class='a' style='left:1358px;top:167px;width:1px;height:49px;background:#2a2a2a'></div>
<div class='a' style='left:1430px;top:167px;width:1px;height:49px;background:#2a2a2a'></div>
<div class='a' style='left:1503px;top:167px;width:1px;height:49px;background:#2a2a2a'></div>
<div class='a' style='left:857px;top:216px;width:707px;height:1px;background:#2a2a2a'></div>
<div class='t' style='left:873px;top:200px;font-size:12px;color:#d0d0d0'>Имя</div>
<div class='t' style='left:1098px;top:200px;font-size:12px;color:#d0d0d0'>Состояние</div>
<svg class='a' style='left:1222px;top:174px' width='9' height='5' viewBox='0 0 9 5'><path d='M0.5 0.5l4 4 4-4' stroke='#d0d0d0' stroke-width='1.1' fill='none'/></svg>
<div class='t' style='left:1177.5px;width:100px;text-align:right;top:177px;font-size:15px;color:#ffffff'>100%</div>
<div class='t' style='left:1177.5px;width:100px;text-align:right;top:200px;font-size:12px;color:#d0d0d0'>ЦП</div>
<div class='t' style='left:1250.5px;width:100px;text-align:right;top:177px;font-size:15px;color:#ffffff'>28%</div>
<div class='t' style='left:1250.5px;width:100px;text-align:right;top:200px;font-size:12px;color:#d0d0d0'>Память</div>
<div class='t' style='left:1323.5px;width:100px;text-align:right;top:177px;font-size:15px;color:#ffffff'>0%</div>
<div class='t' style='left:1323.5px;width:100px;text-align:right;top:200px;font-size:12px;color:#d0d0d0'>Диск</div>
<div class='t' style='left:1396.5px;width:100px;text-align:right;top:177px;font-size:15px;color:#ffffff'>0%</div>
<div class='t' style='left:1396.5px;width:100px;text-align:right;top:200px;font-size:12px;color:#d0d0d0'>Сеть</div>
<div class='a' style='left:857px;top:217px;width:707px;height:437px;overflow:hidden'>
<div class='a' style='left:355px;top:0px;width:73px;height:28px;background:#0267c4'></div>
<div class='t' style='left:355px;width:66px;text-align:right;top:8px;font-size:12px;color:#ffffff;letter-spacing:-0.4px'>95,5%</div>
<div class='a' style='left:428px;top:0px;width:73px;height:28px;background:#0a3a7e'></div>
<div class='t' style='left:428px;width:66px;text-align:right;top:8px;font-size:12px;color:#ffffff;letter-spacing:-0.4px'>1&#8239;484,7 МБ</div>
<div class='a' style='left:501px;top:0px;width:73px;height:28px;background:#14243f'></div>
<div class='t' style='left:501px;width:66px;text-align:right;top:8px;font-size:12px;color:#ffffff;letter-spacing:0px'>0,1 МБ/с</div>
<div class='a' style='left:574px;top:0px;width:73px;height:28px;background:#14243f'></div>
<div class='t' style='left:574px;width:66px;text-align:right;top:8px;font-size:12px;color:#ffffff;letter-spacing:0px'>0 Мбит/с</div>
<svg class='a' style='left:19px;top:9px' width='7' height='11' viewBox='0 0 7 11'><path d='M1 1l4.5 4.5L1 10' stroke='#d0d0d0' stroke-width='1.2' fill='none'/></svg>
<div class='a' style='left:37px;top:6px;width:17px;height:17px;display:flex;align-items:center;justify-content:center'><svg width='17' height='17' viewBox='0 0 17 17'><path d='M12 0.8L16.2 2.8v11.4L12 16.2 5 9.8 2 12.2 0.8 11.5V5.5L2 4.8l3 2.4zM12 4.6L7.6 8.5 12 12.4z' fill='#2f9ff0'/></svg></div>
<div class='t' style='left:59px;top:8px;font-size:12px;color:#ffffff;letter-spacing:-0.2px'>Visual Studio Code (26)</div>
<div class='a' style='left:355px;top:28px;width:73px;height:28px;background:#0a3a7e'></div>
<div class='t' style='left:355px;width:66px;text-align:right;top:36px;font-size:12px;color:#ffffff;letter-spacing:-0.4px'>1,3%</div>
<div class='a' style='left:428px;top:28px;width:73px;height:28px;background:#0a3a7e'></div>
<div class='t' style='left:428px;width:66px;text-align:right;top:36px;font-size:12px;color:#ffffff;letter-spacing:-0.4px'>763,3 МБ</div>
<div class='a' style='left:501px;top:28px;width:73px;height:28px;background:#14243f'></div>
<div class='t' style='left:501px;width:66px;text-align:right;top:36px;font-size:12px;color:#ffffff;letter-spacing:0px'>0,1 МБ/с</div>
<div class='a' style='left:574px;top:28px;width:73px;height:28px;background:#14243f'></div>
<div class='t' style='left:574px;width:66px;text-align:right;top:36px;font-size:12px;color:#ffffff;letter-spacing:0px'>0 Мбит/с</div>
<svg class='a' style='left:19px;top:37px' width='7' height='11' viewBox='0 0 7 11'><path d='M1 1l4.5 4.5L1 10' stroke='#d0d0d0' stroke-width='1.2' fill='none'/></svg>
<div class='a' style='left:37px;top:34px;width:17px;height:17px;display:flex;align-items:center;justify-content:center'><svg width='17' height='17' viewBox='0 0 17 17'><circle cx='8.5' cy='8.5' r='8.5' fill='#5865f2'/><path d='M4.5 5.5q2-1 3-1l.3.6h1.4l.3-.6q1 0 3 1 1.3 2.3 1 5-1.2 1-2.4 1.2l-.5-.8q.6-.2 1-.5-2.9 1.3-5.8 0 .4.3 1 .5l-.5.8Q4.2 11.5 3.5 10.5q-.3-2.7 1-5z' fill='#fff'/><circle cx='6.8' cy='8.3' r='.9' fill='#5865f2'/><circle cx='10.2' cy='8.3' r='.9' fill='#5865f2'/></svg></div>
<div class='t' style='left:59px;top:36px;font-size:12px;color:#ffffff;letter-spacing:-0.2px'>Discord (6)</div>
<div class='a' style='left:355px;top:56px;width:73px;height:28px;background:#14243f'></div>
<div class='t' style='left:355px;width:66px;text-align:right;top:64px;font-size:12px;color:#ffffff;letter-spacing:-0.4px'>0,7%</div>
<div class='a' style='left:428px;top:56px;width:73px;height:28px;background:#14243f'></div>
<div class='t' style='left:428px;width:66px;text-align:right;top:64px;font-size:12px;color:#ffffff;letter-spacing:-0.4px'>56,0 МБ</div>
<div class='a' style='left:501px;top:56px;width:73px;height:28px;background:#14243f'></div>
<div class='t' style='left:501px;width:66px;text-align:right;top:64px;font-size:12px;color:#ffffff;letter-spacing:0px'>0 МБ/с</div>
<div class='a' style='left:574px;top:56px;width:73px;height:28px;background:#14243f'></div>
<div class='t' style='left:574px;width:66px;text-align:right;top:64px;font-size:12px;color:#ffffff;letter-spacing:0px'>0 Мбит/с</div>
<svg class='a' style='left:19px;top:65px' width='7' height='11' viewBox='0 0 7 11'><path d='M1 1l4.5 4.5L1 10' stroke='#d0d0d0' stroke-width='1.2' fill='none'/></svg>
<div class='a' style='left:37px;top:62px;width:17px;height:17px;display:flex;align-items:center;justify-content:center'><svg width='16' height='12' viewBox='0 0 16 12'><rect width='16' height='12' fill='#0a6ad8'/><path d='M0 5.5L4 2.2l4.5 5.3 3-5.3L16 5.8V12H0z' fill='#2ba3f2'/><path d='M0 8.2L4 5.5l4.5 4 3-4.2L16 8.6V12H0z' fill='#b2e6ff'/></svg></div>
<div class='t' style='left:59px;top:64px;font-size:12px;color:#ffffff;letter-spacing:0.1px'>Диспетчер задач</div>
<div class='a' style='left:355px;top:84px;width:73px;height:28px;background:#14243f'></div>
<div class='t' style='left:355px;width:66px;text-align:right;top:92px;font-size:12px;color:#ffffff;letter-spacing:-0.4px'>0,7%</div>
<div class='a' style='left:428px;top:84px;width:73px;height:28px;background:#14243f'></div>
<div class='t' style='left:428px;width:66px;text-align:right;top:92px;font-size:12px;color:#ffffff;letter-spacing:-0.4px'>12,9 МБ</div>
<div class='a' style='left:501px;top:84px;width:73px;height:28px;background:#14243f'></div>
<div class='t' style='left:501px;width:66px;text-align:right;top:92px;font-size:12px;color:#ffffff;letter-spacing:0px'>0 МБ/с</div>
<div class='a' style='left:574px;top:84px;width:73px;height:28px;background:#14243f'></div>
<div class='t' style='left:574px;width:66px;text-align:right;top:92px;font-size:12px;color:#ffffff;letter-spacing:0px'>0 Мбит/с</div>
<div class='a' style='left:37px;top:90px;width:17px;height:17px;display:flex;align-items:center;justify-content:center'><svg width='16' height='12' viewBox='0 0 16 12'><rect x='0' y='0' width='16' height='12' fill='#e6e6e6'/><rect x='.8' y='.8' width='14.4' height='10.4' fill='#f7f7f7'/><rect x='5' y='2.2' width='7.5' height='7.6' fill='#0a74e0'/><path d='M2.2 2.5h1.6M2.2 4.5h1.6M2.2 6.5h1.6M2.2 8.5h1.6M13.2 2.5h1M13.2 8.5h1' stroke='#8a8a8a' stroke-width='.9'/></svg></div>
<div class='t' style='left:59px;top:92px;font-size:12px;color:#ffffff;letter-spacing:0.1px'>Изоляция графов аудиоустр...</div>
<div class='a' style='left:355px;top:112px;width:73px;height:28px;background:#14243f'></div>
<div class='t' style='left:355px;width:66px;text-align:right;top:120px;font-size:12px;color:#ffffff;letter-spacing:-0.4px'>0,5%</div>
<div class='a' style='left:428px;top:112px;width:73px;height:28px;background:#14243f'></div>
<div class='t' style='left:428px;width:66px;text-align:right;top:120px;font-size:12px;color:#ffffff;letter-spacing:-0.4px'>93,4 МБ</div>
<div class='a' style='left:501px;top:112px;width:73px;height:28px;background:#14243f'></div>
<div class='t' style='left:501px;width:66px;text-align:right;top:120px;font-size:12px;color:#ffffff;letter-spacing:0px'>0 МБ/с</div>
<div class='a' style='left:574px;top:112px;width:73px;height:28px;background:#14243f'></div>
<div class='t' style='left:574px;width:66px;text-align:right;top:120px;font-size:12px;color:#ffffff;letter-spacing:0px'>0 Мбит/с</div>
<div class='a' style='left:37px;top:118px;width:17px;height:17px;display:flex;align-items:center;justify-content:center'><svg width='16' height='12' viewBox='0 0 16 12'><rect x='0' y='0' width='16' height='12' fill='#e6e6e6'/><rect x='.8' y='.8' width='14.4' height='10.4' fill='#f7f7f7'/><rect x='5' y='2.2' width='7.5' height='7.6' fill='#0a74e0'/><path d='M2.2 2.5h1.6M2.2 4.5h1.6M2.2 6.5h1.6M2.2 8.5h1.6M13.2 2.5h1M13.2 8.5h1' stroke='#8a8a8a' stroke-width='.9'/></svg></div>
<div class='t' style='left:59px;top:120px;font-size:12px;color:#ffffff;letter-spacing:0.1px'>Диспетчер окон рабочего ст...</div>
<div class='a' style='left:355px;top:140px;width:73px;height:28px;background:#14243f'></div>
<div class='t' style='left:355px;width:66px;text-align:right;top:148px;font-size:12px;color:#ffffff;letter-spacing:-0.4px'>0,4%</div>
<div class='a' style='left:428px;top:140px;width:73px;height:28px;background:#14243f'></div>
<div class='t' style='left:428px;width:66px;text-align:right;top:148px;font-size:12px;color:#ffffff;letter-spacing:-0.4px'>0,1 МБ</div>
<div class='a' style='left:501px;top:140px;width:73px;height:28px;background:#14243f'></div>
<div class='t' style='left:501px;width:66px;text-align:right;top:148px;font-size:12px;color:#ffffff;letter-spacing:0px'>0,1 МБ/с</div>
<div class='a' style='left:574px;top:140px;width:73px;height:28px;background:#14243f'></div>
<div class='t' style='left:574px;width:66px;text-align:right;top:148px;font-size:12px;color:#ffffff;letter-spacing:0px'>0 Мбит/с</div>
<div class='a' style='left:37px;top:146px;width:17px;height:17px;display:flex;align-items:center;justify-content:center'><svg width='16' height='12' viewBox='0 0 16 12'><rect x='0' y='0' width='16' height='12' fill='#e6e6e6'/><rect x='.8' y='.8' width='14.4' height='10.4' fill='#f7f7f7'/><rect x='5' y='2.2' width='7.5' height='7.6' fill='#0a74e0'/><path d='M2.2 2.5h1.6M2.2 4.5h1.6M2.2 6.5h1.6M2.2 8.5h1.6M13.2 2.5h1M13.2 8.5h1' stroke='#8a8a8a' stroke-width='.9'/></svg></div>
<div class='t' style='left:59px;top:148px;font-size:12px;color:#ffffff;letter-spacing:-0.2px'>System</div>
<div class='a' style='left:355px;top:168px;width:73px;height:28px;background:#14243f'></div>
<div class='t' style='left:355px;width:66px;text-align:right;top:176px;font-size:12px;color:#ffffff;letter-spacing:-0.4px'>0,3%</div>
<div class='a' style='left:428px;top:168px;width:73px;height:28px;background:#14243f'></div>
<div class='t' style='left:428px;width:66px;text-align:right;top:176px;font-size:12px;color:#ffffff;letter-spacing:-0.4px'>17,2 МБ</div>
<div class='a' style='left:501px;top:168px;width:73px;height:28px;background:#14243f'></div>
<div class='t' style='left:501px;width:66px;text-align:right;top:176px;font-size:12px;color:#ffffff;letter-spacing:0px'>0 МБ/с</div>
<div class='a' style='left:574px;top:168px;width:73px;height:28px;background:#14243f'></div>
<div class='t' style='left:574px;width:66px;text-align:right;top:176px;font-size:12px;color:#ffffff;letter-spacing:0px'>0 Мбит/с</div>
<div class='a' style='left:37px;top:174px;width:17px;height:17px;display:flex;align-items:center;justify-content:center'><svg width='18' height='17' viewBox='0 0 18 17'><rect x='1' y='6' width='15' height='10' rx='1' fill='#b8c4d0' stroke='#6a7a8a'/><rect x='3' y='8' width='8' height='3' fill='#3a6ea8'/><path d='M12 1l4 1-1 6-3 1z' fill='#c0c8d0' stroke='#5a6a7a' stroke-width='.6'/></svg></div>
<div class='t' style='left:59px;top:176px;font-size:12px;color:#ffffff;letter-spacing:-0.2px'>WMI Provider Host</div>
<div class='a' style='left:355px;top:196px;width:73px;height:28px;background:#14243f'></div>
<div class='t' style='left:355px;width:66px;text-align:right;top:204px;font-size:12px;color:#ffffff;letter-spacing:-0.4px'>0,2%</div>
<div class='a' style='left:428px;top:196px;width:73px;height:28px;background:#14243f'></div>
<div class='t' style='left:428px;width:66px;text-align:right;top:204px;font-size:12px;color:#ffffff;letter-spacing:-0.4px'>189,0 МБ</div>
<div class='a' style='left:501px;top:196px;width:73px;height:28px;background:#14243f'></div>
<div class='t' style='left:501px;width:66px;text-align:right;top:204px;font-size:12px;color:#ffffff;letter-spacing:0px'>0 МБ/с</div>
<div class='a' style='left:574px;top:196px;width:73px;height:28px;background:#14243f'></div>
<div class='t' style='left:574px;width:66px;text-align:right;top:204px;font-size:12px;color:#ffffff;letter-spacing:0px'>0 Мбит/с</div>
<svg class='a' style='left:19px;top:205px' width='7' height='11' viewBox='0 0 7 11'><path d='M1 1l4.5 4.5L1 10' stroke='#d0d0d0' stroke-width='1.2' fill='none'/></svg>
<div class='a' style='left:37px;top:202px;width:17px;height:17px;display:flex;align-items:center;justify-content:center'><svg width='17' height='15' viewBox='0 0 17 15'><path d='M0 1h6l2 2h9v12H0z' fill='#e7a92b'/><path d='M0 5h17v10H0z' fill='#ffcd46'/><rect x='4' y='9' width='9' height='4' fill='#3a8ee6'/></svg></div>
<div class='t' style='left:59px;top:204px;font-size:12px;color:#ffffff;letter-spacing:0.1px'>Проводник</div>
<div class='a' style='left:355px;top:224px;width:73px;height:28px;background:#14243f'></div>
<div class='t' style='left:355px;width:66px;text-align:right;top:232px;font-size:12px;color:#ffffff;letter-spacing:-0.4px'>0,1%</div>
<div class='a' style='left:428px;top:224px;width:73px;height:28px;background:#14243f'></div>
<div class='t' style='left:428px;width:66px;text-align:right;top:232px;font-size:12px;color:#ffffff;letter-spacing:-0.4px'>18,2 МБ</div>
<div class='a' style='left:501px;top:224px;width:73px;height:28px;background:#14243f'></div>
<div class='t' style='left:501px;width:66px;text-align:right;top:232px;font-size:12px;color:#ffffff;letter-spacing:0px'>0 МБ/с</div>
<div class='a' style='left:574px;top:224px;width:73px;height:28px;background:#14243f'></div>
<div class='t' style='left:574px;width:66px;text-align:right;top:232px;font-size:12px;color:#ffffff;letter-spacing:0px'>0 Мбит/с</div>
<svg class='a' style='left:19px;top:233px' width='7' height='11' viewBox='0 0 7 11'><path d='M1 1l4.5 4.5L1 10' stroke='#d0d0d0' stroke-width='1.2' fill='none'/></svg>
<div class='a' style='left:37px;top:230px;width:17px;height:17px;display:flex;align-items:center;justify-content:center'><svg width='17' height='17' viewBox='0 0 17 17'><rect x='.5' y='.5' width='16' height='16' fill='#9cc3ea' stroke='#6d97c4'/><path d='M7.3 2.5h2.4l.4 1.8 1.4.8 1.7-.6 1.2 2-1.3 1.3v1.6l1.3 1.3-1.2 2-1.7-.6-1.4.8-.4 1.8H7.3l-.4-1.8-1.4-.8-1.7.6-1.2-2 1.3-1.3V7.8L2.6 6.5l1.2-2 1.7.6 1.4-.8z' fill='#fff'/><circle cx='8.5' cy='8.5' r='1.8' fill='#9cc3ea'/></svg></div>
<div class='t' style='left:59px;top:232px;font-size:12px;color:#ffffff;letter-spacing:0.1px'>Узел службы: локальная сис...</div>
<div class='a' style='left:355px;top:252px;width:73px;height:28px;background:#14243f'></div>
<div class='t' style='left:355px;width:66px;text-align:right;top:260px;font-size:12px;color:#ffffff;letter-spacing:-0.4px'>0,1%</div>
<div class='a' style='left:428px;top:252px;width:73px;height:28px;background:#14243f'></div>
<div class='t' style='left:428px;width:66px;text-align:right;top:260px;font-size:12px;color:#ffffff;letter-spacing:-0.4px'>1,7 МБ</div>
<div class='a' style='left:501px;top:252px;width:73px;height:28px;background:#14243f'></div>
<div class='t' style='left:501px;width:66px;text-align:right;top:260px;font-size:12px;color:#ffffff;letter-spacing:0px'>0 МБ/с</div>
<div class='a' style='left:574px;top:252px;width:73px;height:28px;background:#14243f'></div>
<div class='t' style='left:574px;width:66px;text-align:right;top:260px;font-size:12px;color:#ffffff;letter-spacing:0px'>0 Мбит/с</div>
<div class='a' style='left:37px;top:258px;width:17px;height:17px;display:flex;align-items:center;justify-content:center'><svg width='16' height='12' viewBox='0 0 16 12'><rect x='0' y='0' width='16' height='12' fill='#e6e6e6'/><rect x='.8' y='.8' width='14.4' height='10.4' fill='#f7f7f7'/><rect x='5' y='2.2' width='7.5' height='7.6' fill='#0a74e0'/><path d='M2.2 2.5h1.6M2.2 4.5h1.6M2.2 6.5h1.6M2.2 8.5h1.6M13.2 2.5h1M13.2 8.5h1' stroke='#8a8a8a' stroke-width='.9'/></svg></div>
<div class='t' style='left:59px;top:260px;font-size:12px;color:#ffffff;letter-spacing:0.1px'>Процесс исполнения клиент...</div>
<div class='a' style='left:355px;top:280px;width:73px;height:28px;background:#14243f'></div>
<div class='t' style='left:355px;width:66px;text-align:right;top:288px;font-size:12px;color:#ffffff;letter-spacing:-0.4px'>0,1%</div>
<div class='a' style='left:428px;top:280px;width:73px;height:28px;background:#14243f'></div>
<div class='t' style='left:428px;width:66px;text-align:right;top:288px;font-size:12px;color:#ffffff;letter-spacing:-0.4px'>0 МБ</div>
<div class='a' style='left:501px;top:280px;width:73px;height:28px;background:#14243f'></div>
<div class='t' style='left:501px;width:66px;text-align:right;top:288px;font-size:12px;color:#ffffff;letter-spacing:0px'>0 МБ/с</div>
<div class='a' style='left:574px;top:280px;width:73px;height:28px;background:#14243f'></div>
<div class='t' style='left:574px;width:66px;text-align:right;top:288px;font-size:12px;color:#ffffff;letter-spacing:0px'>0 Мбит/с</div>
<div class='a' style='left:37px;top:286px;width:17px;height:17px;display:flex;align-items:center;justify-content:center'><svg width='16' height='12' viewBox='0 0 16 12'><rect x='0' y='0' width='16' height='12' fill='#e6e6e6'/><rect x='.8' y='.8' width='14.4' height='10.4' fill='#f7f7f7'/><rect x='.8' y='.8' width='14.4' height='2.2' fill='#c9c9c9'/><rect x='8' y='4.5' width='6' height='5.5' fill='#0a74e0'/><path d='M2.2 5.2h4.5M2.2 7.2h4.5M2.2 9.2h4.5' stroke='#5a8ad0' stroke-width='1'/></svg></div>
<div class='t' style='left:59px;top:288px;font-size:12px;color:#ffffff;letter-spacing:0.1px'>Системные прерывания</div>
<div class='a' style='left:355px;top:308px;width:73px;height:28px;background:#14243f'></div>
<div class='t' style='left:355px;width:66px;text-align:right;top:316px;font-size:12px;color:#ffffff;letter-spacing:-0.4px'>0,1%</div>
<div class='a' style='left:428px;top:308px;width:73px;height:28px;background:#0a3a7e'></div>
<div class='t' style='left:428px;width:66px;text-align:right;top:316px;font-size:12px;color:#ffffff;letter-spacing:-0.4px'>934,4 МБ</div>
<div class='a' style='left:501px;top:308px;width:73px;height:28px;background:#14243f'></div>
<div class='t' style='left:501px;width:66px;text-align:right;top:316px;font-size:12px;color:#ffffff;letter-spacing:0px'>0 МБ/с</div>
<div class='a' style='left:574px;top:308px;width:73px;height:28px;background:#14243f'></div>
<div class='t' style='left:574px;width:66px;text-align:right;top:316px;font-size:12px;color:#ffffff;letter-spacing:0px'>0 Мбит/с</div>
<svg class='a' style='left:19px;top:317px' width='7' height='11' viewBox='0 0 7 11'><path d='M1 1l4.5 4.5L1 10' stroke='#d0d0d0' stroke-width='1.2' fill='none'/></svg>
<div class='a' style='left:37px;top:314px;width:17px;height:17px;display:flex;align-items:center;justify-content:center'><svg width='16' height='16' viewBox='0 0 16 16'><defs><linearGradient id='ffg' x1='0' y1='0' x2='0' y2='1'><stop offset='0' stop-color='#ff9a2e'/><stop offset='.55' stop-color='#ff4455'/><stop offset='1' stop-color='#e3197d'/></linearGradient></defs><circle cx='8' cy='9' r='7' fill='url(#ffg)'/><path d='M8.5 1q5.5 1.5 7 7.5L11.5 9z' fill='#ffcf3a'/><circle cx='7.8' cy='9' r='3.4' fill='#7b4de8'/></svg></div>
<div class='t' style='left:59px;top:316px;font-size:12px;color:#ffffff;letter-spacing:-0.2px'>Firefox (12)</div>
<svg class='a' style='left:327.5px;top:315px' width='17' height='15' viewBox='0 0 17 15' fill='none' stroke='#5ed35a' stroke-width='1.15'><path d='M1 1H5.5A4 4 0 0 1 9.5 5V9.5H5A4 4 0 0 1 1 5.5Z'/><path d='M16 2.5V8A5 5 0 0 1 11 13H7V7.5A5 5 0 0 1 12 2.5Z'/><path d='M3.5 3.5L7 7.5M13.5 5L4 14.5'/></svg>
<div class='a' style='left:355px;top:336px;width:73px;height:28px;background:#14243f'></div>
<div class='t' style='left:355px;width:66px;text-align:right;top:344px;font-size:12px;color:#ffffff;letter-spacing:-0.4px'>0,1%</div>
<div class='a' style='left:428px;top:336px;width:73px;height:28px;background:#0a3a7e'></div>
<div class='t' style='left:428px;width:66px;text-align:right;top:344px;font-size:12px;color:#ffffff;letter-spacing:-0.4px'>578,0 МБ</div>
<div class='a' style='left:501px;top:336px;width:73px;height:28px;background:#14243f'></div>
<div class='t' style='left:501px;width:66px;text-align:right;top:344px;font-size:12px;color:#ffffff;letter-spacing:0px'>0,1 МБ/с</div>
<div class='a' style='left:574px;top:336px;width:73px;height:28px;background:#14243f'></div>
<div class='t' style='left:574px;width:66px;text-align:right;top:344px;font-size:12px;color:#ffffff;letter-spacing:0px'>0 Мбит/с</div>
<svg class='a' style='left:19px;top:345px' width='7' height='11' viewBox='0 0 7 11'><path d='M1 1l4.5 4.5L1 10' stroke='#d0d0d0' stroke-width='1.2' fill='none'/></svg>
<div class='a' style='left:37px;top:342px;width:17px;height:17px;display:flex;align-items:center;justify-content:center'><svg width='16' height='16' viewBox='0 0 16 16'><circle cx='8' cy='8' r='8' fill='#000'/><circle cx='8' cy='8' r='5.8' fill='#fff'/><path d='M4.8 6.6q3.2-1 6.4.4M5.1 8.4q2.9-.8 5.8.4M5.5 10.2q2.3-.6 4.8.3' stroke='#444' stroke-width='1' fill='none'/></svg></div>
<div class='t' style='left:59px;top:344px;font-size:12px;color:#ffffff;letter-spacing:-0.2px'>Spotify Desktop (5)</div>
<svg class='a' style='left:327.5px;top:343px' width='17' height='15' viewBox='0 0 17 15' fill='none' stroke='#5ed35a' stroke-width='1.15'><path d='M1 1H5.5A4 4 0 0 1 9.5 5V9.5H5A4 4 0 0 1 1 5.5Z'/><path d='M16 2.5V8A5 5 0 0 1 11 13H7V7.5A5 5 0 0 1 12 2.5Z'/><path d='M3.5 3.5L7 7.5M13.5 5L4 14.5'/></svg>
<div class='a' style='left:355px;top:364px;width:73px;height:28px;background:#14243f'></div>
<div class='t' style='left:355px;width:66px;text-align:right;top:372px;font-size:12px;color:#ffffff;letter-spacing:-0.4px'>0%</div>
<div class='a' style='left:428px;top:364px;width:73px;height:28px;background:#14243f'></div>
<div class='t' style='left:428px;width:66px;text-align:right;top:372px;font-size:12px;color:#ffffff;letter-spacing:-0.4px'>9,0 МБ</div>
<div class='a' style='left:501px;top:364px;width:73px;height:28px;background:#14243f'></div>
<div class='t' style='left:501px;width:66px;text-align:right;top:372px;font-size:12px;color:#ffffff;letter-spacing:0px'>0 МБ/с</div>
<div class='a' style='left:574px;top:364px;width:73px;height:28px;background:#14243f'></div>
<div class='t' style='left:574px;width:66px;text-align:right;top:372px;font-size:12px;color:#ffffff;letter-spacing:0px'>0 Мбит/с</div>
<svg class='a' style='left:19px;top:373px' width='7' height='11' viewBox='0 0 7 11'><path d='M1 1l4.5 4.5L1 10' stroke='#d0d0d0' stroke-width='1.2' fill='none'/></svg>
<div class='a' style='left:37px;top:370px;width:17px;height:17px;display:flex;align-items:center;justify-content:center'><svg width='17' height='17' viewBox='0 0 17 17'><rect x='.5' y='.5' width='16' height='16' fill='#9cc3ea' stroke='#6d97c4'/><path d='M7.3 2.5h2.4l.4 1.8 1.4.8 1.7-.6 1.2 2-1.3 1.3v1.6l1.3 1.3-1.2 2-1.7-.6-1.4.8-.4 1.8H7.3l-.4-1.8-1.4-.8-1.7.6-1.2-2 1.3-1.3V7.8L2.6 6.5l1.2-2 1.7.6 1.4-.8z' fill='#fff'/><circle cx='8.5' cy='8.5' r='1.8' fill='#9cc3ea'/></svg></div>
<div class='t' style='left:59px;top:372px;font-size:12px;color:#ffffff;letter-spacing:-0.2px'>appmodel</div>
<div class='a' style='left:355px;top:392px;width:73px;height:28px;background:#14243f'></div>
<div class='t' style='left:355px;width:66px;text-align:right;top:400px;font-size:12px;color:#ffffff;letter-spacing:-0.4px'>0%</div>
<div class='a' style='left:428px;top:392px;width:73px;height:28px;background:#14243f'></div>
<div class='t' style='left:428px;width:66px;text-align:right;top:400px;font-size:12px;color:#ffffff;letter-spacing:-0.4px'>97,1 МБ</div>
<div class='a' style='left:501px;top:392px;width:73px;height:28px;background:#14243f'></div>
<div class='t' style='left:501px;width:66px;text-align:right;top:400px;font-size:12px;color:#ffffff;letter-spacing:0px'>0 МБ/с</div>
<div class='a' style='left:574px;top:392px;width:73px;height:28px;background:#14243f'></div>
<div class='t' style='left:574px;width:66px;text-align:right;top:400px;font-size:12px;color:#ffffff;letter-spacing:0px'>0 Мбит/с</div>
<svg class='a' style='left:19px;top:401px' width='7' height='11' viewBox='0 0 7 11'><path d='M1 1l4.5 4.5L1 10' stroke='#d0d0d0' stroke-width='1.2' fill='none'/></svg>
<div class='a' style='left:37px;top:398px;width:17px;height:17px;display:flex;align-items:center;justify-content:center'><svg width='13' height='10' viewBox='0 0 13 10'><rect x='0' y='0.5' width='13' height='9' fill='#76b900'/><path d='M1 5q3.5-4 8-1.5M1.5 5q3.5 3.5 8 1' stroke='#2c4a00' stroke-width='1' fill='none'/><circle cx='6' cy='5' r='1.6' stroke='#2c4a00' stroke-width='.9' fill='none'/></svg></div>
<div class='t' style='left:59px;top:400px;font-size:12px;color:#ffffff;letter-spacing:-0.2px'>NVIDIA Container (2)</div>
<div class='a' style='left:355px;top:420px;width:73px;height:28px;background:#14243f'></div>
<div class='t' style='left:355px;width:66px;text-align:right;top:428px;font-size:12px;color:#ffffff;letter-spacing:-0.4px'>0%</div>
<div class='a' style='left:428px;top:420px;width:73px;height:28px;background:#14243f'></div>
<div class='t' style='left:428px;width:66px;text-align:right;top:428px;font-size:12px;color:#ffffff;letter-spacing:-0.4px'>61,8 МБ</div>
<div class='a' style='left:501px;top:420px;width:73px;height:28px;background:#14243f'></div>
<div class='t' style='left:501px;width:66px;text-align:right;top:428px;font-size:12px;color:#ffffff;letter-spacing:0px'>0 МБ/с</div>
<div class='a' style='left:574px;top:420px;width:73px;height:28px;background:#14243f'></div>
<div class='t' style='left:574px;width:66px;text-align:right;top:428px;font-size:12px;color:#ffffff;letter-spacing:0px'>0 Мбит/с</div>
<div class='a' style='left:37px;top:426px;width:17px;height:17px;display:flex;align-items:center;justify-content:center'><svg width='14' height='14' viewBox='0 0 14 14'><path d='M11 3.5A5 5 0 1 0 12 7.5H7' stroke='#fff' stroke-width='2.4' fill='none'/></svg></div>
<div class='t' style='left:59px;top:428px;font-size:12px;color:#ffffff;letter-spacing:-0.2px'>LGHUB Agent</div>
</div>
<div class='a' style='left:1285px;top:217px;width:1px;height:437px;background:rgba(255,255,255,0.05)'></div>
<div class='a' style='left:1358px;top:217px;width:1px;height:437px;background:rgba(255,255,255,0.05)'></div>
<div class='a' style='left:1430px;top:217px;width:1px;height:437px;background:rgba(255,255,255,0.05)'></div>
<div class='a' style='left:1503px;top:167px;width:61px;height:487px;background:#1a1a1a'></div>
<div class='a' style='left:820px;top:654px;width:744px;height:1px;background:#3a3a3a'></div>
</body></html>
